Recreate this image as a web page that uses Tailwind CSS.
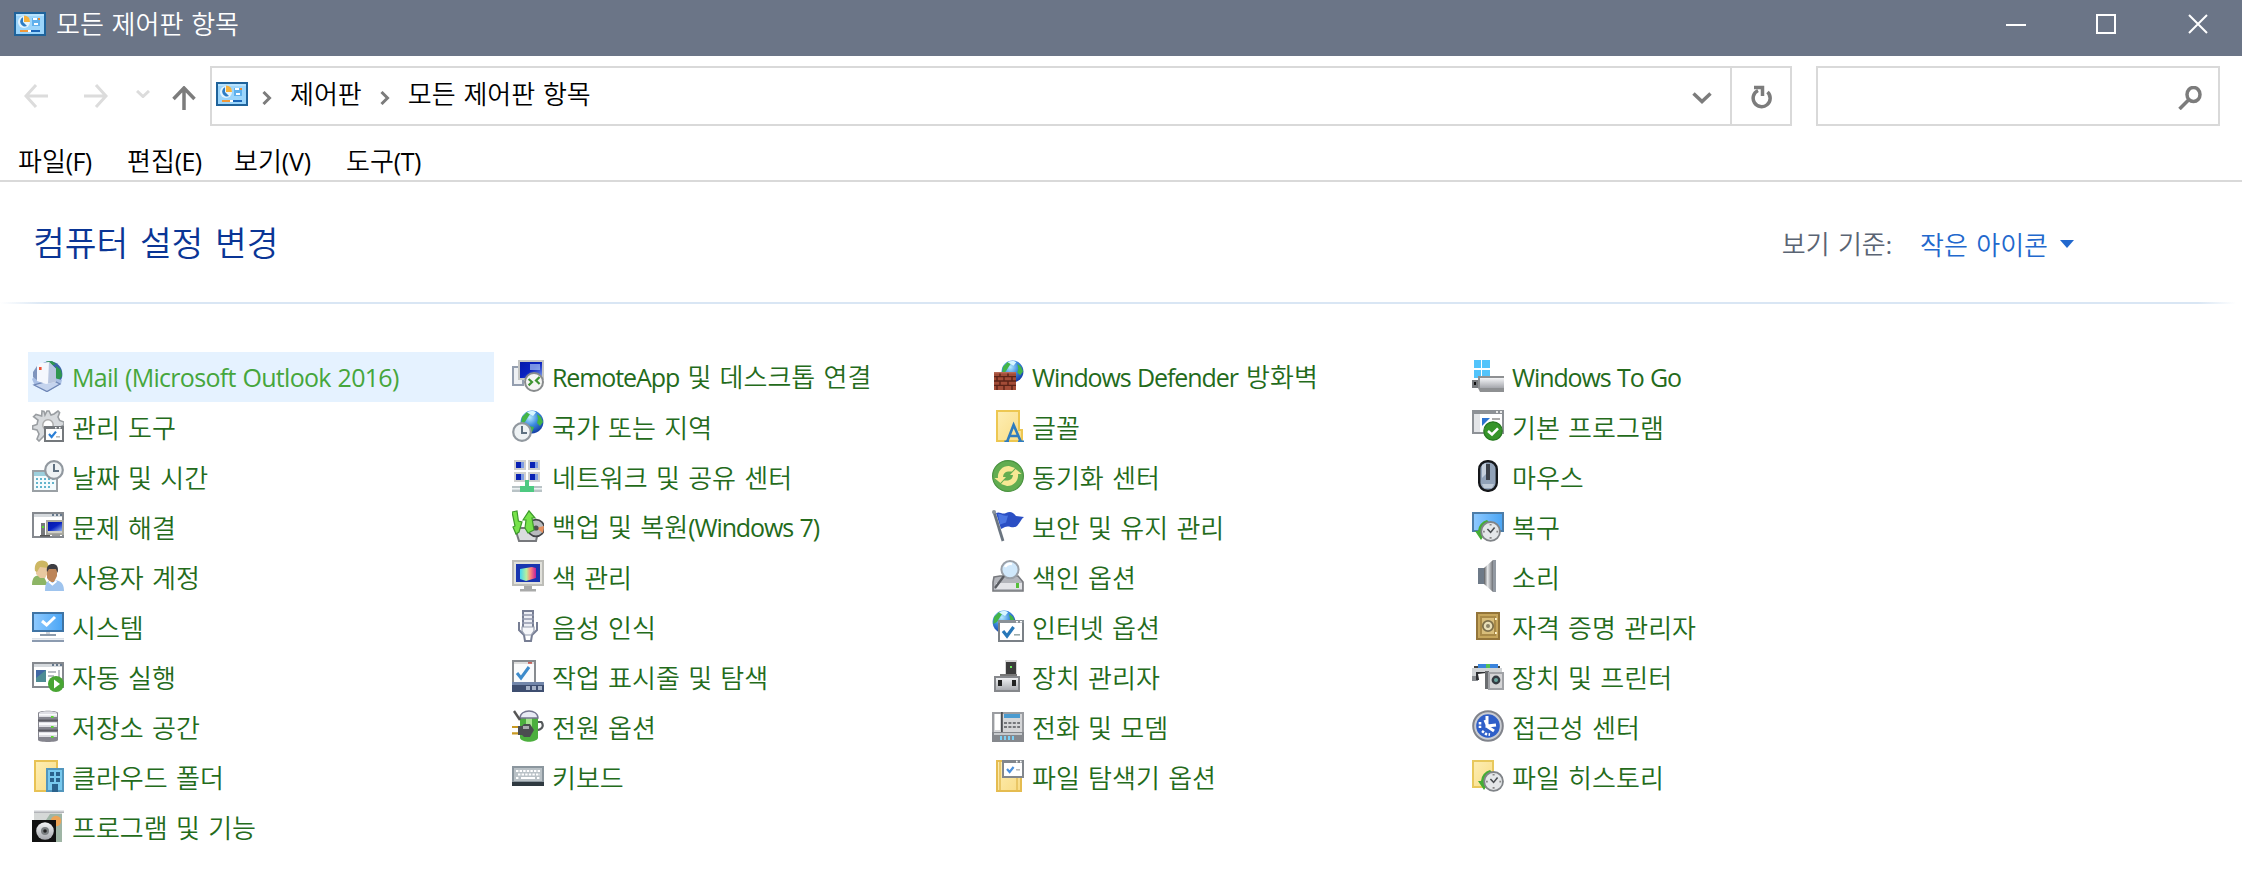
<!DOCTYPE html>
<html lang="ko">
<head>
<meta charset="utf-8">
<title>모든 제어판 항목</title>
<script src="https://cdn.jsdelivr.net/npm/@tailwindcss/browser@4"></script>
</head>
<body class="w-[2242px] h-[896px] overflow-hidden bg-white text-[26px] leading-[32px] font-[350] font-['Noto_Sans_CJK_KR',sans-serif] text-black whitespace-nowrap">

<svg class="absolute h-0 w-0" aria-hidden="true">
  <defs>
    <linearGradient id="gray" x1="0" y1="0" x2="0" y2="1"><stop offset="0" stop-color="#f4f5f7"/><stop offset="1" stop-color="#a5a7ac"/></linearGradient>
    <linearGradient id="blue" x1="0" y1="0" x2="1" y2="0"><stop offset="0" stop-color="#8fcaff"/><stop offset="1" stop-color="#4aa5f5"/></linearGradient>
    <linearGradient id="navy" x1="0" y1="0" x2="1" y2="1"><stop offset="0" stop-color="#0418a8"/><stop offset=".5" stop-color="#0a22c0"/><stop offset="1" stop-color="#8fb0ee"/></linearGradient>
    <linearGradient id="folder" x1="0" y1="0" x2="1" y2="1"><stop offset="0" stop-color="#fdeeb4"/><stop offset="1" stop-color="#f9dc85"/></linearGradient>
    <radialGradient id="earth" cx=".4" cy=".3" r=".7"><stop offset="0" stop-color="#b8ecff"/><stop offset=".5" stop-color="#3f8de0"/><stop offset="1" stop-color="#1540a8"/></radialGradient>
    <linearGradient id="rainbow"><stop offset="0" stop-color="#42d6f2"/><stop offset=".4" stop-color="#b7f0a0"/><stop offset=".65" stop-color="#ff8a7a"/><stop offset="1" stop-color="#c0209a"/></linearGradient>
    <linearGradient id="metal"><stop offset="0" stop-color="#5a5c60"/><stop offset=".4" stop-color="#e6e8ea"/><stop offset="1" stop-color="#6e7176"/></linearGradient>

    <symbol id="panel" viewBox="0 0 16 12"><rect x=".5" y=".5" width="15" height="11" fill="#9bd5fb" stroke="#1f639b"/><path d="M1 1h14v1H1z" fill="#b7e2fd"/><circle cx="5" cy="5" r="3" fill="#e3f4ff"/><path d="M4.500 2.600A2.400 2.400 0 1 0 6.500 7L4.500 5z" fill="#2d7cc4"/><path d="M5 1.700A3 3 0 0 1 8 5H5z" fill="#f5b13d"/><path d="M9 3h4v4H9z" fill="#5fb0ec"/><path d="M9.500 3h2v1h-2zM10 5.500h2v1h-2z" fill="#fff"/><path d="M12 3h1v1h-1z" fill="#e88a30"/><path d="M3 9h4v1H3z" fill="#f0993a"/><path d="M7 9h1.500v1H7z" fill="#fff"/><path d="M8.500 9H13v1H8.500z" fill="#1b66b8"/></symbol>
    <symbol id="globe" viewBox="0 0 12 12"><circle cx="6" cy="6" r="5.700" fill="url(#earth)"/><path d="M1 3.500 3.500 1l2 .3-1.300 2L2.500 6 .6 7zM8.500 2l2 1.500 1 2.500-1.500 2L8.500 6.500l.5-2zM4 8l3 .5-1 2.700-2-.7z" fill="#43b547"/><path d="M3.500 1.200C5 .3 7 .4 8 1.200L6.500 3z" fill="#d9f6ff"/></symbol>
    <symbol id="clock" viewBox="0 0 10 10"><circle cx="5" cy="5" r="4.400" fill="#eef2f4" stroke="#91989f" stroke-width="1.100"/><path d="M5 2v3.500h2.500" fill="none" stroke="#5e7080"/></symbol>
    <symbol id="history" viewBox="0 0 13 11"><path d="M6 0A6 6 0 0 0 1.500 5.500H0L3 10l3-4.500H4.500C4.600 3.500 5.500 2 7 1z" fill="#44ad35"/><circle cx="7.800" cy="5.700" r="4.700" fill="#e4e7e9" stroke="#808488" stroke-width=".9"/><path d="m6.200 4.500 1.600 1.700L9.800 3.800" fill="none" stroke="#4a4e52" stroke-width=".8"/><path d="M7.300 2h1v.8h-1zM7.300 8.500h1v.9h-1zM4 5.400h.9v.9H4zM10.700 5.400h.9v.9h-.9z" fill="#888"/></symbol>
    <symbol id="window" viewBox="0 0 16 13"><path d="M.5.5h15v12H.5z" fill="#fff" stroke="#85898f"/><path d="M1 1h14v1.500H1z" fill="#d5d9dd"/><path d="M10 1h1v1h-1zM12 1h1v1h-1zM14 1h1v1h-1z" fill="#65788c"/></symbol>

    <symbol id="mail" viewBox="0 0 16 16"><circle cx="8.800" cy="7" r="6.400" fill="#3b62a8"/><path d="M7 .8 10 .5l2 1.500L9 3zM12 3l2.500 2 .6 3-2.500 3-1.600-4z" fill="#2f9650"/><path d="M0 9.500 3 6.500l10 3 2 .5-.5 2-7 4-6-3z" fill="#a9bfe4"/><path d="M1 12.500 7.500 15.800 14 12l-4-2z" fill="#c5d4ee" stroke="#6e86b5" stroke-width=".6"/><path d="M2.500 3 4 1.500 8.500 1 12 4.500V11l-5 1-4.500-1.500z" fill="#f4f7fd"/><path d="M8.500 1 12 4.500V11l-4 .8z" fill="#b9c6df"/><path d="M2.500 3v7l-2-1.500V6z" fill="#7f95bd"/><path d="M3.500 3.500h1.300v1.500H3.500z" fill="#f05236"/></symbol>
    <symbol id="tools" viewBox="0 0 16 16"><path d="M6.500 2.500 7.500.5h1l1 2L11 2l2-1.500.8.800L13 3.500l.8 1.700L16 6v1.500L13.500 9v3L8 14l-2-1-2.500 2.500-1-1L3.500 12 2.500 10 .3 9.500V8l2.200-.8L3 5 .8 3.300 2 2.200 4.800 3 5 .5l1 .2z" fill="#d7dadd" stroke="#9a9ea2" stroke-width=".8"/><circle cx="8" cy="7.500" r="2.600" fill="#fff" stroke="#aaa" stroke-width=".7"/><path d="M6.500 8.500h9v7h-9z" fill="#fff" stroke="#74787c"/><path d="M6 8h10v1.500H6z" fill="#74787c"/><path d="M11.500 8.500h.8v.7h-.8zM13.500 8.500h.8v.7h-.8z" fill="#fff"/><path d="m8.500 12 1.300 1.500L12 10.800" fill="none" stroke="#2b7fd6" stroke-width="1.100"/><path d="M12 13h2v.8h-2z" fill="#bbb"/></symbol>
    <symbol id="date" viewBox="0 0 16 16"><path d="M.5 5.500h12v10H.5z" fill="#f4fbfd" stroke="#9aa0a5"/><path d="M1 6h11v2H1z" fill="#9ccfdd"/><path d="M2 9.500h9M2 11.500h9M2 13.500h7" stroke="#62b4cc" stroke-dasharray="1 1"/><use href="#clock" x="6" width="10" height="10"/></symbol>
    <symbol id="trouble" viewBox="0 0 16 16"><use href="#window" y="1" width="16" height="13"/><path d="M7.500 5.500h8v6.500h-8z" fill="#cfcfc8" stroke="#a7a79f"/><path d="M8 6h7v4.500H8z" fill="url(#navy)"/><path d="M10 12h4v1h-4z" fill="#999"/><path d="M4.500 6.500h2v6.500h-2z" fill="#77797c"/><path d="M5 8h1v1H5z" fill="#58e02c"/><path d="M4 12.500h5v.8H4z" fill="#555"/></symbol>
    <symbol id="users" viewBox="0 0 16 16"><path d="M0 12.500c0-3 1-4.500 3-4.700l3 .7 2 4z" fill="#8db565"/><path d="M2 3h6v3.500L6.500 9H4L2 7z" fill="#e9c9a0"/><path d="M1.500 5.500C1 2 2.500.2 5 .2S8.700 2 8 4L4 3.500 2.500 6z" fill="#cdb763"/><path d="M6.500 15.500c0-4 1-5 3-5.200h3c2.500.5 3.500 2.500 3.500 5.200z" fill="#9fc4ee"/><path d="M7.500 4.500h5V8l-1.500 3H9L7.500 9z" fill="#bd8558"/><path d="M7.500 6c-.5-3 1-4 2.700-4 2 0 3.300 1.200 2.600 4.500L12 4.500H8.500z" fill="#3d3d42"/><path d="m8.500 10.700 1.700 1.500 2-1.700" fill="none" stroke="#fff"/></symbol>
    <symbol id="system" viewBox="0 0 16 16"><path d="M.5 1.500h15v9H.500z" fill="url(#blue)" stroke="#3f74a5"/><path d="m5 5.500 2.300 2L11.500 3.500" fill="none" stroke="#fff" stroke-width="1.500"/><path d="M7 11h2v1H7z" fill="#cfd4da"/><path d="M4 12h8v1H4z" fill="#8c9bac"/><path d="M0 14h16v.8H0z" fill="#dde2e8"/><path d="M0 15h16v1H0z" fill="#8c9bb0"/></symbol>
    <symbol id="autorun" viewBox="0 0 16 16"><use href="#window" y="1" width="16" height="13"/><path d="M2 5h5v6H2z" fill="#4e8c95"/><path d="M2 5h5L2 9z" fill="#4168a5"/><path d="M8 6h4M8 8h3M13.500 5v4" stroke="#b9bec5"/><circle cx="12" cy="12" r="4" fill="#48a533"/><path d="M11 9.800v4.400l3-2.200z" fill="#fff"/></symbol>
    <symbol id="storage" viewBox="0 0 16 16"><path d="M3 1.500C3 0 13 0 13 1.500V15c0 1.300-10 1.300-10 0z" fill="#85858e"/><path d="M3.500 1.500C4 .3 12 .3 12.500 1.500v2H3.500zM3.500 6h9v2.500h-9zM3.500 11h9v2.500h-9z" fill="#dedee4"/><path d="M3.500 2h9v.8h-9zM3.500 6.500h9v1h-9zM3.500 11.500h9v1h-9z" fill="#fafafc"/><path d="M3 4.800h10v.8H3zM3 9.800h10v.8H3z" fill="#5e5e66"/><path d="M9.500 3h1.300v.9H9.500zM9.500 8h1.300v.9H9.500zM9.500 13h1.300v.9H9.500z" fill="#5cd632"/></symbol>
    <symbol id="cloud" viewBox="0 0 16 16"><path d="M1.500.5h11v15h-11z" fill="url(#folder)" stroke="#e8c254"/><path d="M7.500 4.500h8v11h-8z" fill="#78c9ee" stroke="#5296bd"/><path d="M9 6h2v2H9zM12 6h2v2h-2zM9 9h2v2H9zM12 9h2v2h-2zM10 12h3v4h-3z" fill="#2a628c"/></symbol>
    <symbol id="programs" viewBox="0 0 16 16"><path d="M1 0h15v1.500h-1V16H1z" fill="#d5d8d7"/><path d="M1 0h15v1.500H1z" fill="url(#gray)"/><path d="M15 2v14h-4L7 5l2-3z" fill="#9fb5a5"/><circle cx="12" cy="5.500" r="2.600" fill="#eda456"/><path d="M0 5h12v11H0z" fill="#111"/><circle cx="6.500" cy="10.500" r="4.400" fill="url(#gray)"/><circle cx="6.500" cy="10.500" r="2" fill="#7c8083"/><circle cx="6.500" cy="10.500" r=".9" fill="#222"/></symbol>

    <symbol id="remote" viewBox="0 0 16 16"><path d="M.5 3.500h5v9h-5z" fill="#eff1f4" stroke="#949eaf"/><path d="M3.500.5h12v9h-12z" fill="url(#navy)" stroke="#c5c6c4"/><path d="M9 2h5v3H9z" fill="#a9c5f4" opacity=".7"/><circle cx="11" cy="11" r="4.500" fill="#f5f5f4" stroke="#888b8d"/><path d="m8.300 9.500 1.700 1.500-1.700 1.700M13.800 8.500 12 10.300l1.800 1.700" fill="none" stroke="#3e9330" stroke-width="1.100"/></symbol>
    <symbol id="region" viewBox="0 0 16 16"><use href="#globe" x="4" width="12" height="12"/><use href="#clock" y="6" width="10" height="10"/></symbol>
    <symbol id="network" viewBox="0 0 16 16"><path d="M1 0h6v5H1zM8 0h6v5H8zM1 6h6v5H1zM8 6h6v5H8z" fill="#d0d0ce"/><path d="M2 1h4v3H2zM9 1h4v3H9zM2 7h4v3H2zM9 7h4v3H9z" fill="#0a22b4"/><path d="M4.500 1H6v3H4.500zM11.500 1H13v3h-1.500zM4.500 7H6v3H4.500zM11.500 7H13v3h-1.500z" fill="#7f9ce2"/><path d="M0 13h15v3H0z" fill="#b9c3c6"/><path d="M0 14h15v.8H0z" fill="#edf2f3"/><path d="M6.500 10h2v3H11v3H4v-3h2.500z" fill="#4ec981"/></symbol>
    <symbol id="backup" viewBox="0 0 16 16"><path d="M1.500 9h12l-1.500 6.500H3.500z" fill="#dadcde" stroke="#77797d"/><circle cx="12" cy="9" r="4.200" fill="#b8babd" stroke="#434548" stroke-width=".8"/><path d="m12 9 4-1-.5 3.500z" fill="#e7905e"/><circle cx="12" cy="9" r="1.300" fill="#4d4f52"/><path d="m0 1 2.500-.5.7 5L5 6l-1.500 5L2 12 .5 8.500l1-.5zM5.500 5 8.500.4 11.500 4H10l1 6-3 1.500L6.500 9l.5-4z" fill="#77e34b" stroke="#3d9a2b" stroke-width=".6"/></symbol>
    <symbol id="color" viewBox="0 0 16 16"><path d="M.5.5h15v12H.5z" fill="#1835b0" stroke="#bdbdb8"/><path d="M1.500 1.500h13v10h-13z" fill="none" stroke="#e0e0da"/><path d="M4 4.500 10 3.500l2 .5v5l-5 1.500-3-1z" fill="url(#rainbow)"/><path d="M6 13h4v1.500h2v1.200H4v-1.200h2z" fill="#a9aaa9"/></symbol>
    <symbol id="speech" viewBox="0 0 16 16"><path d="M5.500.5h5v10h-5z" fill="#eceef4" stroke="#777e94"/><path d="M5 2.500h6M5 4.500h6M5 6.500h6" stroke="#9198ac" stroke-width=".7"/><path d="M3.500 6v4L6 12.500l.5 3h3l.5-3 2.500-2.500V6" fill="none" stroke="#777e94"/><path d="M5 8.500h6v2l-1.500 2h-3L5 10.500z" fill="#f6f7fa" stroke="#989fb0" stroke-width=".6"/></symbol>
    <symbol id="taskbar" viewBox="0 0 16 16"><path d="M.5.500h11V12H.500z" fill="#fafbfc" stroke="#878b90"/><path d="M1 1h10v1H1z" fill="#ddd"/><path d="M8 1h2v.9H8z" fill="#c6605a"/><path d="M2.500 6.500 4.500 9 8.500 3.500" fill="none" stroke="#3d8bcb" stroke-width="1.500"/><path d="M0 11h16v5H0z" fill="#3e4e70"/><path d="M0 11h16v1.500H0z" fill="#7286aa"/><path d="M7 13h2v2H7zM10 13h2v2h-2zM13 13h2v2h-2z" fill="#a6b2c8"/></symbol>
    <symbol id="power" viewBox="0 0 16 16"><path d="M12.500 6h2.200c1.200 1.500.8 3.500-1.700 4l-3 .5" fill="none" stroke="#55595b" stroke-width="1.100"/><path d="M4 4h9v10c-1 2.500-8 2.500-9 0z" fill="#4caf3e"/><path d="M7 4h3v8H7z" fill="#a5e38d"/><path d="M4 4C4-.7 13-.7 13 4z" fill="#e9ebf5" stroke="#74758f" stroke-width=".7"/><path d="m1 .5 3 4.500" stroke="#555" stroke-width="1.200"/><path d="M0 8.500h4M0 11.700h4" stroke="#c99a22" stroke-width="1.100"/><path d="M3 8h2l1-1h3l2 3-2 3.500H6l-1-1H3z" fill="#4b4d50"/><path d="M5.500 8h3v1.500h-3z" fill="#a9abae"/></symbol>
    <symbol id="keyboard" viewBox="0 0 16 16"><path d="M0 3h16v8.500H0z" fill="#8b969e"/><path d="M1 4h14v6.500H1z" fill="#b9c1c6"/><path d="M2 5.500h12M3 7.200h11M2 9h1.500M12.500 9H14" stroke="#fff" stroke-dasharray="1.200 .6"/><path d="M4.500 8.500h7v1h-7z" fill="#fff"/><path d="M0 11h16v2H0z" fill="#2f3940"/></symbol>

    <symbol id="firewall" viewBox="0 0 16 16"><use href="#globe" x="4.500" width="11.500" height="11.500"/><path d="M1 6h11v9H1z" fill="#a34c37"/><path d="M1 8.300h11M1 10.500h11M1 12.700h11M4 6v2.300M8 6v2.300M2.500 8.500v2M6 8.500v2M10 8.500v2M4 10.500v2M8 10.500v2M2.500 13v2M6 13v2M10 13v2" stroke="#5b2318" stroke-width=".7"/><path d="M1 6h11v.7H1z" fill="#b96c58"/></symbol>
    <symbol id="fonts" viewBox="0 0 16 16"><path d="M2.500.5h11V10H15v5.500H2.500z" fill="url(#folder)" stroke="#edc751"/><path d="m7.500 16 3.300-8.500L14.500 16M8.700 13h4.700" fill="none" stroke="#2f7cbe" stroke-width="1.300"/><path d="M6.200 15.300h2.300V16H6.200zM13 15.300h3V16h-3z" fill="#2f7cbe"/></symbol>
    <symbol id="sync" viewBox="0 0 16 16"><circle cx="8" cy="8" r="7.700" fill="#62ad50" stroke="#4a9240" stroke-width=".6"/><path d="M3 9A5.300 5.300 0 0 1 8.500 3l3 1-1.500 1.800H8A3 3 0 0 0 5.500 8.500H7L4.200 11.500 1.200 9zM13 7a5.300 5.300 0 0 1-5.500 6l-3-1L6 10.200h2a3 3 0 0 0 2.500-2.700H9l2.800-3L14.800 7z" fill="#f8e894"/></symbol>
    <symbol id="flag" viewBox="0 0 16 16"><path d="M2 1.500C4 .5 5 2.500 7 1.500s3.500-.5 5 1.500l4 .5c-1.500 1-2 3-3.500 4.500-2 1.500-4-.500-6 .5L4.500 9.500z" fill="#2b4fc4"/><path d="M3 2c2-.3 3 1.500 5 .7l-1 3.500-3 1z" fill="#4c76e2"/><path d="m1 1 4.500 14.500" stroke="#6b7580" stroke-width="1.400"/><circle cx="1" cy="1" r="1" fill="#8a949e"/></symbol>
    <symbol id="index" viewBox="0 0 16 16"><path d="m1 8.500 3-.5h9l2.500 3v4.500H.5V11z" fill="#b3b5bb" stroke="#77797e" stroke-width=".8"/><path d="M2 11.500h13v3H2z" fill="#e3e4e8"/><path d="M12 11.500h1.500v2.500H12z" fill="#56bf3a"/><circle cx="9" cy="4.800" r="4.300" fill="#d0e8fb" stroke="#9aa0a8"/><path d="M6.500 3.500A3 3 0 0 1 10 2" stroke="#fff" fill="none" stroke-width="1.200"/><path d="m6 8-4.500 6" stroke="#595c61" stroke-width="1.200"/></symbol>
    <symbol id="internet" viewBox="0 0 16 16"><use href="#globe" width="12" height="12"/><path d="M3.500 5.500h12v10h-12z" fill="#fff" stroke="#7b8187"/><path d="M3 5h13v1.500H3z" fill="#8a9198"/><path d="M12 5.500h1v.8h-1zM14 5.500h1v.8h-1z" fill="#fff"/><path d="m5.500 10.500 2 2.500 3.300-4.500" fill="none" stroke="#2777b8" stroke-width="1.600"/><path d="M11 12h3v.8h-3z" fill="#9aa"/></symbol>
    <symbol id="device" viewBox="0 0 16 16"><path d="M6.500 0h6v8h-6z" fill="#d5d5d5"/><path d="M7 1h5v6.500H7z" fill="#3c3c3c"/><path d="M9 3h1v1H9z" fill="#6aeb5a"/><path d="M4 7h8.500v1H4z" fill="#777"/><path d="M1.500 8.500h12v7h-12z" fill="url(#gray)" stroke="#86888c"/><path d="M3 10h2v3H3zM10 10h2v3h-2z" fill="#222"/></symbol>
    <symbol id="phone" viewBox="0 0 16 16"><path d="M0 1h16v12H0z" fill="#d5d6d8"/><path d="M.5 1.500h15v11H.5z" fill="none" stroke="#9b9da1"/><path d="M1.500 2h2.500v8H1.500z" fill="#fff"/><path d="M4.500 1h.9v11h-.9z" fill="#4c4e52"/><path d="M6 2h8v2H6z" fill="#4a9bd0"/><path d="M6 6.500h8M6 8.500h8" stroke="#55585c" stroke-width=".8" stroke-dasharray="1.500 .7"/><path d="M0 11h16v5H0z" fill="#85888d"/><path d="M1 11.500h14v1H1z" fill="#c7cacd"/><path d="M4 14h7" stroke="#7bd0f6" stroke-width="2" stroke-dasharray="1 1"/></symbol>
    <symbol id="explorer" viewBox="0 0 16 16"><path d="M2.500.5h12v15h-12z" fill="url(#folder)" stroke="#e5bc50"/><path d="M4 1v14M12.500 9v6" stroke="#e5c05c" stroke-width=".8"/><path d="M5.500.5h10v8h-10z" fill="#fff" stroke="#82878d"/><path d="M5 0h11v1.500H5z" fill="#82878d"/><path d="M12 .4h.8v.8H12zM14 .4h.8v.8H14z" fill="#fff"/><path d="m7.500 4.500 1.300 1.500 2-2.500" fill="none" stroke="#4a90dd" stroke-width="1.100"/><path d="M12 4.500h2v.8h-2z" fill="#bbb"/></symbol>

    <symbol id="togo" viewBox="0 0 16 16"><path d="M1 0h3.500v4H1zM5 0h4v4H5zM1 5h3.500v4H1zM5 5h4v4H5z" fill="#52c4fb"/><path d="M3 8h13v8H4l-1-2z" fill="#8e9092"/><path d="M4 9h12v5H4z" fill="url(#gray)"/><path d="M0 10h3v4H0z" fill="#777a7d"/><path d="M1 11h1v1.500H1z" fill="#111"/></symbol>
    <symbol id="defaults" viewBox="0 0 16 16"><path d="M.5.500h15v11H.5z" fill="#fff" stroke="#8d9196"/><path d="M0 0h16v2H0z" fill="#8d9196"/><path d="M12 .5h1v1h-1zM14 .5h1v1h-1z" fill="#e8e8e8"/><path d="M1 2h3v9H1z" fill="#e3e5e8"/><path d="M5 4h4L5 8z" fill="#2d74d0"/><path d="M10 4.500h4" stroke="#aaa"/><circle cx="10.500" cy="10.500" r="4.600" fill="#36952a" stroke="#277a20" stroke-width=".6"/><path d="m8 10.500 2 1.700 3-3" fill="none" stroke="#fff" stroke-width="1.300"/></symbol>
    <symbol id="mouse" viewBox="0 0 16 16"><rect x="3.600" y=".6" width="8.800" height="14.800" rx="4" fill="#91a2b8" stroke="#15171a" stroke-width="1.200"/><path d="M5 2.500 7 1.500V7L5 9z" fill="#c6d0dc"/><path d="M7 2h2v8H7z" fill="#3b4048"/><path d="M5 12h6l-1 2H6z" fill="#c0cbd8"/></symbol>
    <symbol id="recovery" viewBox="0 0 16 16"><path d="M.5 1.500h15v9H.5z" fill="url(#blue)" stroke="#4d7da8"/><use href="#history" x="1.500" y="5" width="13" height="11"/></symbol>
    <symbol id="sound" viewBox="0 0 16 16"><path d="M3 4h3v8H3z" fill="#6e7a88"/><path d="M6 4 10.500 0v16L6 12z" fill="url(#metal)"/><path d="M10.500 0h1.500v16h-1.500z" fill="#9299a2"/></symbol>
    <symbol id="credential" viewBox="0 0 16 16"><path d="M2.500 1.500h11v13h-11z" fill="#c6a65c" stroke="#94753a"/><path d="M4.500 3.500h7v9h-7z" fill="#d8bd7a" stroke="#a98a48"/><circle cx="8" cy="8" r="2.600" fill="#e9dfb8" stroke="#7d6f4a" stroke-width=".9"/><circle cx="8" cy="8" r="1" fill="#8c8468"/><path d="M11.500 4h.9v1h-.9zM11.500 11h.9v1h-.9z" fill="#fff4cf"/></symbol>
    <symbol id="printer" viewBox="0 0 16 16"><path d="M3 2h10v2H3z" fill="#3a84dd"/><path d="M7 2h2v2.500H7z" fill="#56c254"/><path d="M1 3h2v1H1zM13 3h1v1h-1z" fill="#444"/><path d="M0 4h15v4.500H0z" fill="#d0d3d5"/><path d="M0 8h3v2.500H0z" fill="#888c90"/><path d="M2 6h5v4H2z" fill="#2e3033"/><path d="m3 7 4-.5v5l-3 1z" fill="#fff"/><path d="M6.500 5.500h2v9h-2z" fill="#6a6d70"/><path d="M8.500 6.500h7v8h-7z" fill="#d4d4d6" stroke="#a0a2a6"/><circle cx="12" cy="10" r="2.200" fill="#343b42"/><circle cx="12" cy="10" r="1" fill="#68a49f"/></symbol>
    <symbol id="access" viewBox="0 0 16 16"><circle cx="8" cy="8" r="7.400" fill="#cacdd3" stroke="#80838b"/><circle cx="8" cy="8" r="5.900" fill="#2f5fc8"/><path d="M7.500 3v5l4.500-.5M6.500 5 8 8.500l3 2" fill="none" stroke="#fff" stroke-width="1.500"/><path d="M4 6v3M5 10.500l2 1.500 2 .3" fill="none" stroke="#fff" stroke-width="1.300" stroke-dasharray="1.200 .7"/></symbol>
    <symbol id="filehistory" viewBox="0 0 16 16"><path d="M.5.500h10v13H.5z" fill="url(#folder)" stroke="#e8c85c"/><use href="#history" x="3" y="5" width="13" height="11"/></symbol>
  </defs>
</svg>

<header class="flex h-[56px] items-center bg-[#6b7587] pl-[14px] text-white">
  <svg class="mb-2 h-6 w-8"><use href="#panel"/></svg>
  <h1 class="mb-[10px] ml-[10px] [word-spacing:0.5px]">모든 제어판 항목</h1>
  <div class="mb-2 mr-[34px] ml-auto flex gap-[70px]">
    <svg class="h-5 w-5" viewBox="0 0 20 20"><path d="M0 10h20v2H0z" fill="#fff"/></svg>
    <svg class="h-5 w-5" viewBox="0 0 20 20"><path d="M1 1h18v18H1z" fill="none" stroke="#fff" stroke-width="2"/></svg>
    <svg class="ml-[2px] h-5 w-5" viewBox="0 0 20 20"><path d="m1 1 18 18M19 1 1 19" stroke="#fff" stroke-width="2"/></svg>
  </div>
</header>

<nav class="flex h-[60px] mt-[10px] items-center pr-[22px]">
  <div class="flex w-[210px] shrink-0 items-center pl-6">
    <svg class="h-6 w-6" viewBox="0 0 24 24" fill="none" stroke="#dcdcdc" stroke-width="3"><path d="M24 12H2M12 1 2 12l10 11"/></svg>
    <svg class="ml-9 h-6 w-6" viewBox="0 0 24 24" fill="none" stroke="#dcdcdc" stroke-width="3"><path d="M0 12h22M12 1l10 11-10 11"/></svg>
    <svg class="mb-1 ml-7 h-2 w-3.5" viewBox="0 0 14 8" fill="none" stroke="#dcdcdc" stroke-width="3"><path d="m1 1 6 5.500L13 1"/></svg>
    <svg class="mt-1 ml-[22px] h-6 w-6" viewBox="0 0 24 24" fill="none" stroke="#7c7c7c" stroke-width="3.500"><path d="M12 24V2M1.500 13 12 2l10.500 11"/></svg>
  </div>
  <div class="flex h-full w-[1522px] shrink-0 items-center border-2 border-[#d9d9d9] pl-1">
    <svg class="mb-1 h-6 w-8"><use href="#panel"/></svg>
    <svg class="mt-[3px] ml-[14px] h-[14px] w-[10px]" viewBox="0 0 10 14" fill="none" stroke="#7c7c7c" stroke-width="3"><path d="m1.500 1 6 6-6 6"/></svg>
    <span class="mb-[6px] ml-[18px]">제어판</span>
    <svg class="mt-[3px] ml-[18px] h-[14px] w-[10px]" viewBox="0 0 10 14" fill="none" stroke="#7c7c7c" stroke-width="3"><path d="m1.500 1 6 6-6 6"/></svg>
    <span class="mb-[6px] ml-[18px] [word-spacing:0.5px]">모든 제어판 항목</span>
    <svg class="mt-1 mr-[18px] ml-auto h-3 w-5" viewBox="0 0 20 12" fill="none" stroke="#7c7c7c" stroke-width="3.500"><path d="m1.500 1.500 8.500 8 8.500-8"/></svg>
  </div>
  <div class="flex h-full w-[60px] shrink-0 items-center justify-center border-2 border-l-0 border-[#d9d9d9]">
    <svg class="mt-[2px] ml-[2px] h-6 w-6" viewBox="0 0 24 24" fill="none" stroke="#7c7c7c" stroke-width="3.500"><path d="M17.500 7A8.500 8.500 0 1 1 8 5.500"/><path d="M4 2.500h8.500v8.500"/></svg>
  </div>
  <div class="ml-auto flex h-full w-[404px] shrink-0 items-center justify-end border-2 border-[#d9d9d9] pr-4">
    <svg class="mt-[3px] h-6 w-6" viewBox="0 0 24 24" fill="none" stroke="#7c7c7c" stroke-width="3.500"><ellipse cx="15.500" cy="8.500" rx="6.500" ry="7"/><path d="M11 13.500 1.500 23"/></svg>
  </div>
</nav>

<div class="flex h-[56px] items-center border-b-2 border-[#d9d9d9] pt-[14px] pl-[18px]">
  <span class="w-[109px]">파일<span class="font-['Open_Sans'] font-normal text-[25px] tracking-[-0.7px]">(F)</span></span>
  <span class="w-[107px]">편집<span class="font-['Open_Sans'] font-normal text-[25px] tracking-[-0.7px]">(E)</span></span>
  <span class="w-[112px]">보기<span class="font-['Open_Sans'] font-normal text-[25px] tracking-[-0.2px]">(V)</span></span>
  <span>도구<span class="font-['Open_Sans'] font-normal text-[25px] tracking-[-0.5px]">(T)</span></span>
</div>

<main>
  <div class="flex h-[120px] items-center">
    <h2 class="mb-[2px] ml-[33px] text-[34.5px] leading-[40px] text-[#0a3595] [word-spacing:2px]">컴퓨터 설정 변경</h2>
    <span class="mt-[3px] mr-[28px] ml-auto text-[#5a6473] [word-spacing:1px]">보기 기준<span class="font-['Open_Sans'] font-normal text-[24px]">:</span></span>
    <span class="mt-[3px] text-[#2268cd] [word-spacing:1px]">작은 아이콘</span>
    <svg class="mt-1 mr-[168px] ml-3 h-2 w-3.5" viewBox="0 0 14 8"><path d="M0 0h14L7 8z" fill="#2268cd"/></svg>
  </div>
  <div class="h-[2px] bg-[linear-gradient(to_right,#fff,#d9e6f4_44px,#d9e6f4_2198px,#fff_2236px)]"></div>
  <div id="items" class="mt-12 ml-7 grid w-max grid-flow-col grid-cols-[repeat(4,480px)] grid-rows-[repeat(10,50px)] text-[#246b1b]"></div>
</main>

<script>
  const columns = [
    [["mail", "Mail (Microsoft Outlook 2016)"], ["tools", "관리 도구"], ["date", "날짜 및 시간"], ["trouble", "문제 해결"], ["users", "사용자 계정"], ["system", "시스템"], ["autorun", "자동 실행"], ["storage", "저장소 공간"], ["cloud", "클라우드 폴더"], ["programs", "프로그램 및 기능"]],
    [["remote", "RemoteApp 및 데스크톱 연결"], ["region", "국가 또는 지역"], ["network", "네트워크 및 공유 센터"], ["backup", "백업 및 복원(Windows 7)"], ["color", "색 관리"], ["speech", "음성 인식"], ["taskbar", "작업 표시줄 및 탐색"], ["power", "전원 옵션"], ["keyboard", "키보드"]],
    [["firewall", "Windows Defender 방화벽"], ["fonts", "글꼴"], ["sync", "동기화 센터"], ["flag", "보안 및 유지 관리"], ["index", "색인 옵션"], ["internet", "인터넷 옵션"], ["device", "장치 관리자"], ["phone", "전화 및 모뎀"], ["explorer", "파일 탐색기 옵션"]],
    [["togo", "Windows To Go"], ["defaults", "기본 프로그램"], ["mouse", "마우스"], ["recovery", "복구"], ["sound", "소리"], ["credential", "자격 증명 관리자"], ["printer", "장치 및 프린터"], ["access", "접근성 센터"], ["filehistory", "파일 히스토리"]],
  ];
  const columnStarts = ["col-start-1", "col-start-2", "col-start-3", "col-start-4"];
  document.getElementById("items").innerHTML = columns.map((items, c) => items.map(([icon, label], r) => {
    const first = c === 0 && r === 0;
    const tracking = first ? "tracking-[-0.7px]" : "tracking-[-1.1px]";
    const text = label.replace(/[A-Za-z(][A-Za-z0-9() ]*[A-Za-z0-9)]/g,
      m => `<span class="font-['Open_Sans'] font-normal text-[25px] ${tracking}">${m}</span>`);
    const active = first ? "bg-[#e5f2ff] text-[#46a63c]" : "";
    return `<a class="${columnStarts[c]} ${active} flex h-[50px] w-[466px] items-center pl-1">
      <svg class="mb-[2px] h-8 w-8 shrink-0"><use href="#${icon}"/></svg>
      <span class="mb-px ml-2 [word-spacing:1px]">${text}</span></a>`;
  }).join("")).join("");
</script>
</body>
</html>
